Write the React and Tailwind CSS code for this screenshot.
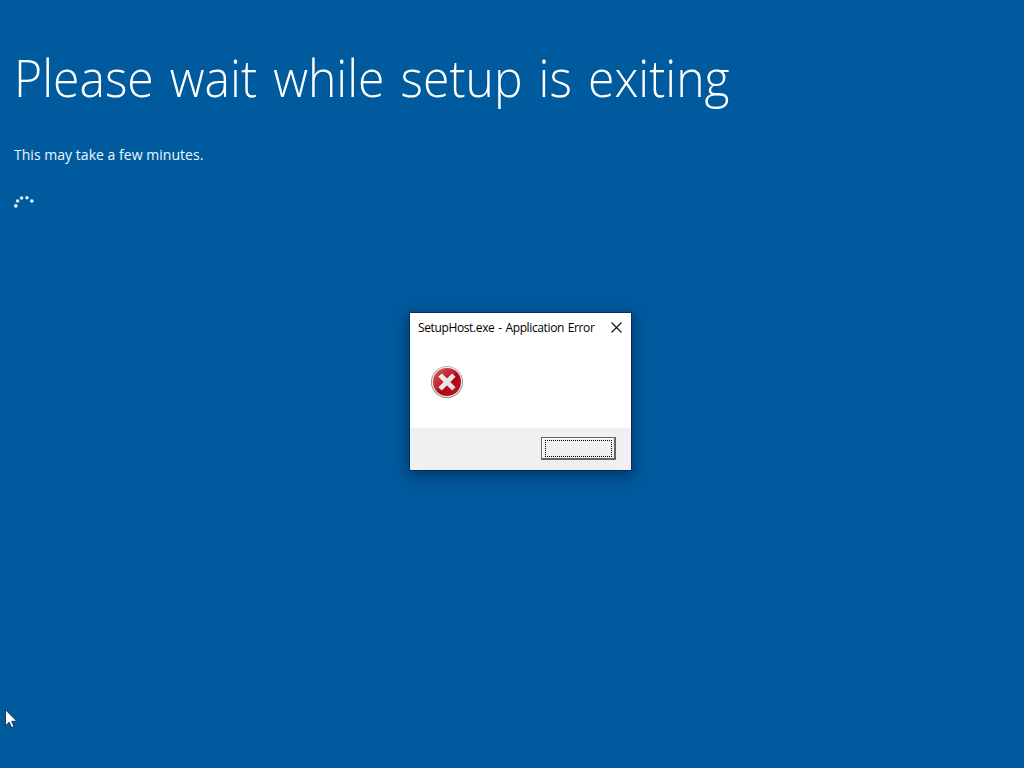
import React from 'react';

// White dots of the progress ring, first one leading
const dots = [
  { x: 15.8, y: 205.9, r: 1.8 },
  { x: 17.6, y: 200.9, r: 1.7 },
  { x: 21.6, y: 198, r: 1.7 },
  { x: 27, y: 197.7, r: 1.7 },
  { x: 31.8, y: 201, r: 1.8 },
];

function ProgressRing() {
  return (
    <svg className="block" width="24" height="24" viewBox="12 194 24 24" aria-label="Loading">
      {dots.map((dot) => (
        <circle key={dot.x} cx={dot.x} cy={dot.y} r={dot.r} fill="#e9fbff" />
      ))}
    </svg>
  );
}

function ErrorIcon() {
  return (
    <svg className="block" width="34" height="34" viewBox="0 0 34 34">
      <defs>
        <linearGradient id="ring" x1="0" y1="0" x2="0" y2="1">
          <stop offset="0" stopColor="#a5a5a5" />
          <stop offset="1" stopColor="#707070" />
        </linearGradient>
        <linearGradient id="disc" x1="0" y1="0" x2="1" y2="1">
          <stop offset="0" stopColor="#d4646a" />
          <stop offset="0.45" stopColor="#bd1e26" />
          <stop offset="0.55" stopColor="#ae0610" />
          <stop offset="1" stopColor="#c01a20" />
        </linearGradient>
        <linearGradient id="cross" x1="0" y1="0" x2="1" y2="1">
          <stop offset="0" stopColor="#fbf5f3" />
          <stop offset="1" stopColor="#d5d8da" />
        </linearGradient>
      </defs>
      <circle cx="17" cy="17" r="16" fill="url(#ring)" />
      <circle cx="17" cy="17" r="15.2" fill="#f3e9e9" />
      <circle cx="17" cy="17" r="14" fill="url(#disc)" />
      <path
        d="M11.8 8.4 17 13.6l5.2-5.2 3.4 3.4L20.4 17l5.2 5.2-3.4 3.4L17 20.4l-5.2 5.2-3.4-3.4L13.6 17l-5.2-5.2z"
        fill="url(#cross)"
      />
    </svg>
  );
}

function ErrorDialog() {
  return (
    <div className="absolute left-[410px] top-[313px] flex h-[157px] w-[221px] flex-col bg-white shadow-[0_0_0_1px_rgba(0,32,70,0.6),0_4px_14px_2px_rgba(0,20,50,0.5)]">
      <div className="flex h-[30px] shrink-0 items-center justify-between pl-2 pr-[10px]">
        <span className="whitespace-nowrap text-[12px] leading-[30px] tracking-[-0.37px] [word-spacing:1px] text-black">
          SetupHost.exe - Application Error
        </span>
        <button type="button" aria-label="Close" className="mb-[2px]">
          <svg className="-mr-[0.5px] block" width="11" height="11" viewBox="0 0 11 11">
            <path d="M.5.5l10 10M10.5.5l-10 10" stroke="#111" strokeWidth="1.1" />
          </svg>
        </button>
      </div>
      <div className="flex-1 pl-5 pt-[22px]">
        <ErrorIcon />
      </div>
      <div className="flex h-[42px] shrink-0 items-start justify-end bg-[#f0f0f0] pr-[15px] pt-[9px]">
        <button
          type="button"
          aria-label="OK"
          className="h-[23px] w-[75px] border border-[#646464] bg-[#f0f0f0] pb-[2px] pl-[3px] pr-[2px] pt-[2px] shadow-[inset_-1px_-1px_0_#696969,inset_1px_1px_0_#fff]"
        >
          <span className="block h-[17px] w-[67px] border border-dotted border-black" />
        </button>
      </div>
    </div>
  );
}

function Cursor() {
  return (
    <svg className="absolute left-[5px] top-[709px]" width="13" height="20" viewBox="0 0 13 20">
      <path
        d="M.5.7v16l3.7-3.5 2.4 5.4 2.4-1-2.4-5.3h5.2z"
        fill="#fff"
        stroke="#06203d"
        strokeWidth="0.8"
      />
    </svg>
  );
}

export default function App() {
  return (
    <main className="relative h-screen w-full overflow-hidden bg-[#005a9e] pl-[14px] pt-[41px] font-['Open_Sans','Noto_Sans',sans-serif]">
      <h1 className="w-fit origin-left scale-x-[0.925] whitespace-nowrap text-[52px] font-light leading-[72px] text-white [word-spacing:3.9px]">
        Please wait while setup is exiting
      </h1>
      <p className="mt-[32px] whitespace-nowrap text-[14px] leading-5 tracking-[0.03px] text-[#eef8ff]">
        This may take a few minutes.
      </p>
      <div className="-ml-[2px] mt-[29px]">
        <ProgressRing />
      </div>
      <ErrorDialog />
      <Cursor />
    </main>
  );
}
